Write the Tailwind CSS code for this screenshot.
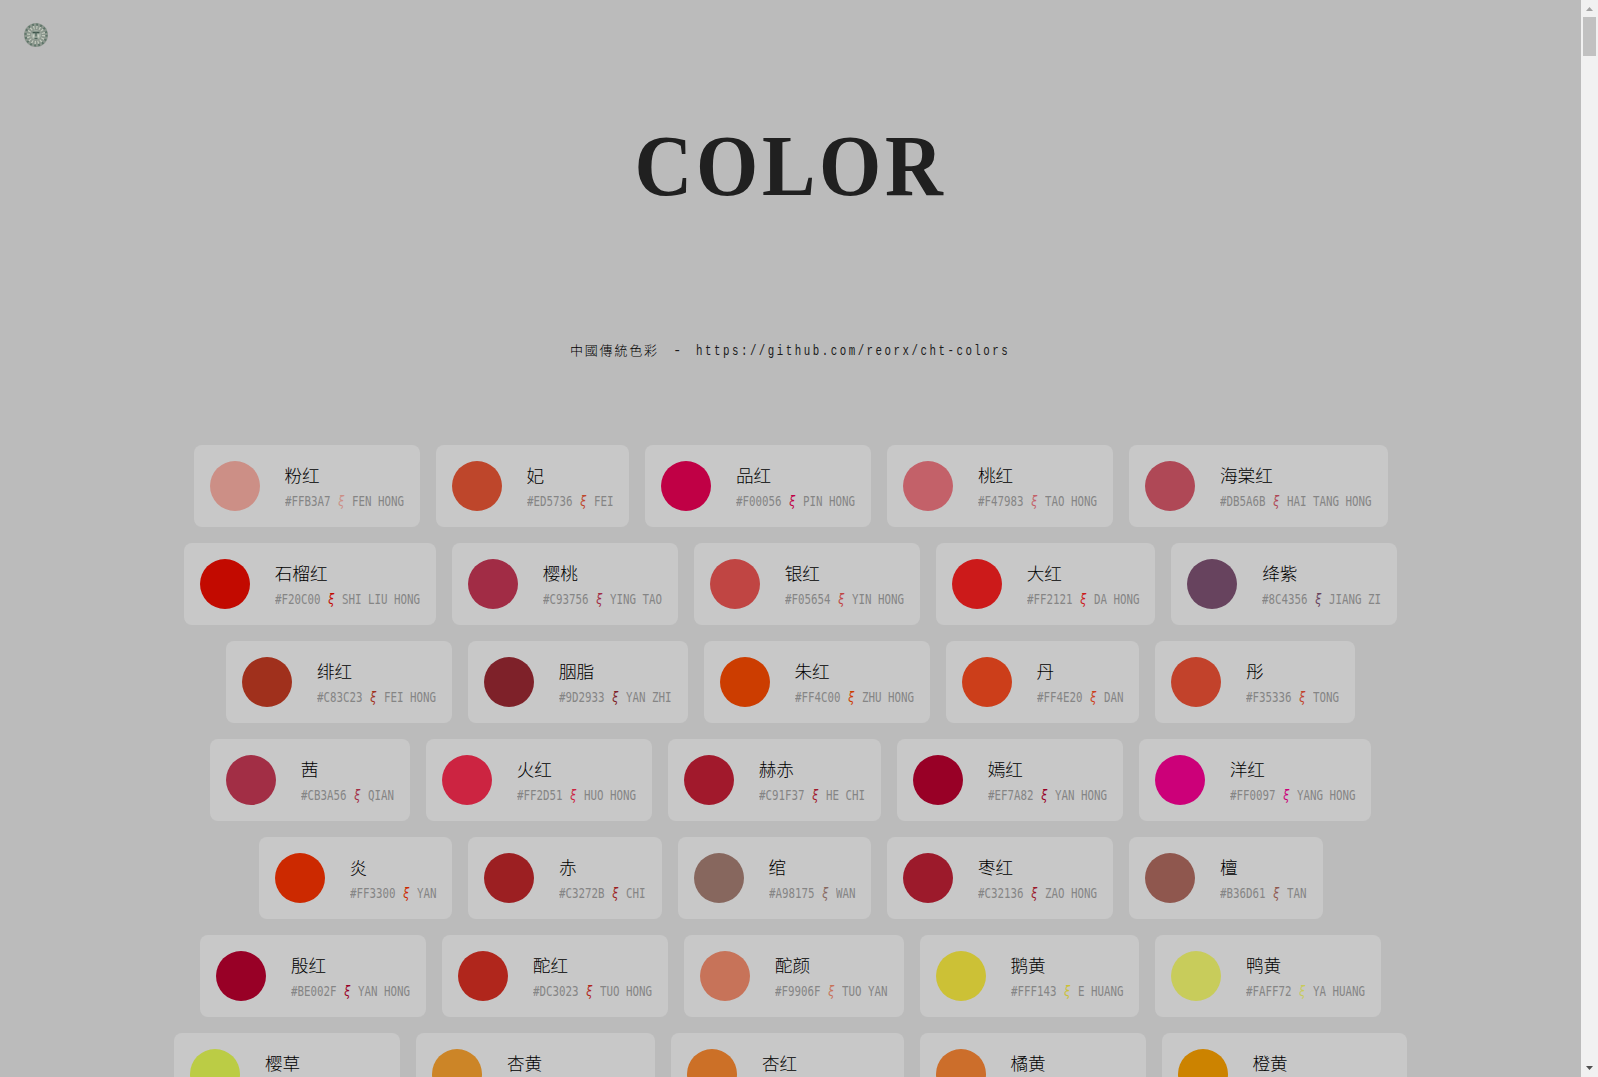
<!DOCTYPE html>
<html lang="zh">
<head>
<meta charset="utf-8">
<title>COLOR</title>
<script src="https://cdn.jsdelivr.net/npm/@tailwindcss/browser@4"></script>
</head>
<body class="flex h-screen overflow-hidden bg-[#bbbbbb] text-[#202020]">
<main class="relative h-full w-[1581px] shrink-0 overflow-hidden">
  <svg class="absolute left-6 top-[23px] size-6" viewBox="0 0 24 24">
    <circle cx="12" cy="12" r="12" fill="#8b968d"/>
    <circle cx="12" cy="12" r="9" fill="none" stroke="#5d7468" stroke-width="5" stroke-dasharray="1.5 2.03"/>
    <circle cx="12" cy="12" r="7.6" fill="none" stroke="#c3c9bd" stroke-width="3.4" stroke-dasharray="1.4 1.58"/>
    <circle cx="12" cy="12" r="5" fill="#a3afa4"/>
    <path d="M8.500 9.500h7" stroke="#3f564c" stroke-width="1.6" fill="none"/>
    <path d="M12 9v4.500M10.500 15.500h3" stroke="#4f665b" stroke-width="1.300" fill="none"/>
    <path d="M9.500 11.500v3M14.500 11.500v3" stroke="#c9cfc4" stroke-width="1.500" fill="none"/>
  </svg>
  <h1 class="flex h-[334px] justify-center pt-[116px] font-['Liberation_Serif',serif] text-[87px] font-bold leading-[100px]"><span class="inline-block h-[100px] scale-x-[0.92] tracking-[4px]">COLOR</span></h1>
  <p class="flex h-[111px] pl-[570px] text-[13px] leading-8 text-[#1c1c1c]">
    <span class="w-[103px] font-['Noto_Sans_CJK_TC',sans-serif] font-light tracking-[1.8px] text-black">中國傳統色彩</span>
    <span class="w-[23px] pt-px font-['Liberation_Mono',monospace] text-[14px]">-</span>
    <span class="inline-block h-8 origin-left scale-x-[0.77] whitespace-nowrap pt-px font-['Liberation_Mono',monospace] text-[14px] tracking-[3.26px]">https://github.com/reorx/cht-colors</span>
  </p>
  <div id="rows" class="flex flex-col gap-4"></div>
</main>
<aside class="flex w-[17px] shrink-0 flex-col items-center bg-[#f1f1f1]">
  <svg class="h-[17px] w-[17px] shrink-0" viewBox="0 0 17 17"><path d="M5 11h7L8.5 7z" fill="#a3a3a3"/></svg>
  <div class="h-[39px] w-[13px] bg-[#c1c1c1]"></div>
  <svg class="mt-auto h-[17px] w-[17px] shrink-0" viewBox="0 0 17 17"><path d="M5 6h7l-3.500 4z" fill="#505050"/></svg>
</aside>
<script>
// Each entry: name, hex label, romanisation, optional swatch colour
const rows = [
  [["粉红","FFB3A7","FEN HONG"],["妃","ED5736","FEI"],["品红","F00056","PIN HONG"],["桃红","F47983","TAO HONG"],["海棠红","DB5A6B","HAI TANG HONG"]],
  [["石榴红","F20C00","SHI LIU HONG"],["樱桃","C93756","YING TAO"],["银红","F05654","YIN HONG"],["大红","FF2121","DA HONG"],["绛紫","8C4356","JIANG ZI","815476"]],
  [["绯红","C83C23","FEI HONG"],["胭脂","9D2933","YAN ZHI"],["朱红","FF4C00","ZHU HONG"],["丹","FF4E20","DAN"],["彤","F35336","TONG"]],
  [["茜","CB3A56","QIAN"],["火红","FF2D51","HUO HONG"],["赫赤","C91F37","HE CHI"],["嫣红","EF7A82","YAN HONG","BE002F"],["洋红","FF0097","YANG HONG"]],
  [["炎","FF3300","YAN"],["赤","C3272B","CHI"],["绾","A98175","WAN"],["枣红","C32136","ZAO HONG"],["檀","B36D61","TAN"]],
  [["殷红","BE002F","YAN HONG"],["酡红","DC3023","TUO HONG"],["酡颜","F9906F","TUO YAN"],["鹅黄","FFF143","E HUANG"],["鸭黄","FAFF72","YA HUANG"]],
  [["樱草","EAFF56","YING CAO"],["杏黄","FFA631","XING HUANG"],["杏红","FF8C31","XING HONG"],["橘黄","FF8936","JU HUANG"],["橙黄","FFA400","CHENG HUANG"]]
];
const shade = h => "rgb(" + [0, 2, 4].map(i => Math.round(parseInt(h.slice(i, i + 2), 16) * 0.8)).join(",") + ")";
document.getElementById("rows").innerHTML = rows.map(r => `
  <div class="flex justify-center gap-4">${r.map(([cn, hex, py, sw]) => {
    const c = shade(sw || hex);
    return `
    <div class="flex h-[82px] shrink-0 rounded-lg bg-[#c8c8c8] p-4" style="width:${174 + py.length * 6.5}px">
      <div class="size-[50px] shrink-0 rounded-full" style="background:${c}"></div>
      <div class="ml-[25px] whitespace-nowrap">
        <div class="h-[30px] font-['Noto_Sans_CJK_SC',sans-serif] text-[17.6px] font-light leading-[27px] text-black">${cn}</div>
        <div class="flex h-5 font-['DejaVu_Sans_Mono',monospace] text-[14.5px] leading-[21px] text-[#858585]">
          <span class="w-[53px] shrink-0"><span class="inline-block origin-left scale-x-[0.745]">#${hex}</span></span>
          <span class="w-[14px] shrink-0"><span class="inline-block origin-left scale-x-[0.745] italic" style="color:${c}">ξ</span></span>
          <span class="w-0"><span class="inline-block origin-left scale-x-[0.745]">${py}</span></span>
        </div>
      </div>
    </div>`;
  }).join("")}</div>`).join("");
</script>
</body>
</html>
